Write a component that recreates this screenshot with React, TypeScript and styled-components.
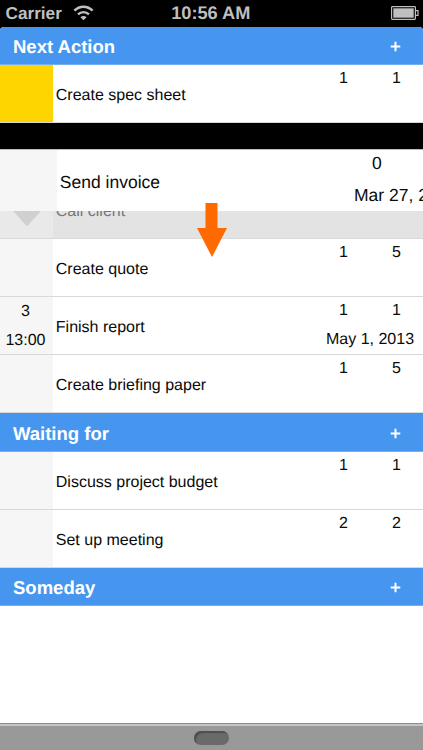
import React from "react";
import styled, { createGlobalStyle } from "styled-components";

const GlobalStyle = createGlobalStyle`
  * { box-sizing: border-box; }
  body { margin: 0; background: #000; }
`;

const Screen = styled.div`
  position: relative;
  width: 423px;
  height: 750px;
  display: flex;
  flex-direction: column;
  overflow: hidden;
  background: #000;
  color: #0a0a0a;
  font-family: "Liberation Sans", Arial, sans-serif;
  font-size: 16px;
  line-height: 20px;
  white-space: nowrap;
  text-rendering: geometricPrecision;
`;

const StatusBar = styled.header`
  flex: none;
  height: 27px;
  display: grid;
  grid-template-columns: 1fr auto 1fr;
  align-items: center;
  padding: 0 4px 1px 5.5px;
  color: #bfbfbf;
  font-size: 17.2px;
  font-weight: bold;
`;

const Carrier = styled.div`
  display: flex;
  align-items: center;
  gap: 11px;
`;

const Clock = styled.div`
  font-size: 18.2px;
  margin-right: 3px;
`;

const BatterySlot = styled.div`
  display: flex;
  justify-content: flex-end;
`;

const List = styled.main`
  flex: 1;
  display: flex;
  flex-direction: column;
  background: #fff;
  border-radius: 4px 4px 0 0;
  overflow: hidden;
`;

const SectionHeader = styled.div`
  flex: none;
  height: 38.4px;
  display: flex;
  align-items: center;
  justify-content: space-between;
  padding: 2px 22px 0 13px;
  background: #4696f0;
  border-bottom: 0.5px solid #74aff3;
  color: #fff;
  font-size: 18.5px;
  font-weight: bold;
`;

const SectionName = styled.span`
  padding-top: 1px;
`;

const Row = styled.div<{ $muted?: boolean }>`
  flex: none;
  height: 58px;
  display: grid;
  grid-template-columns: 53px 1fr 106px;
  border-bottom: 1px solid #d9d9d9;
  background: ${(p) => (p.$muted ? "#e3e3e3" : "#fff")};
  color: ${(p) => (p.$muted ? "#777" : "#0a0a0a")};
`;

const Marker = styled.div<{ $color?: string }>`
  display: flex;
  flex-direction: column;
  align-items: center;
  padding: 5px 2px 0 0;
  gap: 9px;
  background: ${(p) => p.$color ?? "#f6f6f6"};
`;

const Title = styled.div`
  align-self: center;
  padding: 5px 0 0 2.8px;
`;

const Meta = styled.div`
  display: grid;
  grid-template-columns: 1fr 1fr;
  grid-auto-rows: 20px;
  row-gap: 9px;
  padding-top: 4px;
  text-align: center;
`;

const DueDate = styled.div`
  grid-column: 1 / -1;
`;

const DropGap = styled.div`
  flex: none;
  height: 58px;
  background: #000;
`;

const DraggedCard = styled.div`
  position: absolute;
  left: 0;
  top: 149px;
  width: 463px;
  height: 62px;
  display: grid;
  grid-template-columns: 57px 1fr 115px;
  border-top: 1px solid #bdbdbd;
  background: #fff;
  font-size: 17.5px;
`;

const DraggedTitle = styled(Title)`
  padding-top: 3px;
`;

const DraggedMeta = styled(Meta)`
  row-gap: 12px;
  padding-top: 3px;
`;

const DropArrow = styled.svg`
  position: absolute;
  left: 197px;
  top: 203px;
`;

const Dock = styled.footer`
  flex: none;
  height: 27px;
  display: flex;
  align-items: center;
  justify-content: center;
  padding-top: 1px;
  background: #999;
  border-top: 1px solid #8d8d8d;
  box-shadow: inset 0 2px #c4c4c4;
`;

const Grip = styled.div`
  width: 35px;
  height: 14px;
  border-radius: 7px;
  background: #6a6a6a;
  box-shadow: inset 2px 2px 1px #4f4f4f;
`;

type Task = {
  title: string;
  counts?: [string, string];
  due?: string;
  marker?: string[];
  color?: string;
};

const TaskRow = ({ title, counts, due, marker, color }: Task) => (
  <Row>
    <Marker $color={color}>
      {marker?.map((m) => <span key={m}>{m}</span>)}
    </Marker>
    <Title>{title}</Title>
    <Meta>
      {counts?.map((c, i) => <span key={i}>{c}</span>)}
      {due && <DueDate>{due}</DueDate>}
    </Meta>
  </Row>
);

const Section = ({ name }: { name: string }) => (
  <SectionHeader>
    <SectionName>{name}</SectionName>
    <svg width="11" height="11" viewBox="0 0 11 11">
      <path d="M5.5 .7v9.6M.7 5.5h9.6" stroke="#fff" strokeWidth="2" />
    </svg>
  </SectionHeader>
);

const Wifi = () => (
  <svg width="21" height="16" viewBox="0 0 21 16" fill="none" stroke="#bfbfbf">
    <path d="M1.4 5.6C6.5.4 14.5.4 19.6 5.6" strokeWidth="2.6" />
    <path d="M5 9.4c3.2-3.1 7.8-3.1 11 0" strokeWidth="2.4" />
    <path d="M10.5 15.3 7.4 12.2c1.8-1.7 4.4-1.7 6.2 0z" fill="#bfbfbf" stroke="none" />
  </svg>
);

const Battery = () => (
  <svg width="28" height="14" viewBox="0 0 28 14">
    <rect x=".6" y=".6" width="23.8" height="12.8" rx=".8" fill="none" stroke="#bfbfbf" strokeWidth="1.2" />
    <rect x="2.3" y="2.3" width="20.4" height="9.4" fill="#bfbfbf" />
    <path d="M24.5 4.6h2.5v4.8h-2.5" fill="none" stroke="#bfbfbf" strokeWidth="1.2" />
  </svg>
);

export default function App() {
  return (
    <>
      <GlobalStyle />
      <Screen>
        <StatusBar>
          <Carrier>
            <span>Carrier</span>
            <Wifi />
          </Carrier>
          <Clock>10:56 AM</Clock>
          <BatterySlot>
            <Battery />
          </BatterySlot>
        </StatusBar>
        <List>
          <Section name="Next Action" />
          <TaskRow title="Create spec sheet" counts={["1", "1"]} color="#ffd500" />
          <DropGap />
          <Row $muted>
            <Marker $color="#e9e9e9">
              <svg width="30" height="42" viewBox="-2 0 30 42">
                <path d="M0 25h28L14 40.5z" fill="#d0d0d0" />
              </svg>
            </Marker>
            <Title>Call client</Title>
          </Row>
          <TaskRow title="Create quote" counts={["1", "5"]} />
          <TaskRow title="Finish report" counts={["1", "1"]} due="May 1, 2013" marker={["3", "13:00"]} />
          <TaskRow title="Create briefing paper" counts={["1", "5"]} />
          <Section name="Waiting for" />
          <TaskRow title="Discuss project budget" counts={["1", "1"]} />
          <TaskRow title="Set up meeting" counts={["2", "2"]} />
          <Section name="Someday" />
        </List>
        <Dock>
          <Grip />
        </Dock>
        <DraggedCard>
          <Marker />
          <DraggedTitle>Send invoice</DraggedTitle>
          <DraggedMeta>
            <span>0</span>
            <span />
            <DueDate>Mar 27, 2013</DueDate>
          </DraggedMeta>
        </DraggedCard>
        <DropArrow width="30" height="54" viewBox="0 0 30 54">
          <path d="M8.5 0h12v25H30L15 54 0 25h8.5z" fill="#ff6a00" />
        </DropArrow>
      </Screen>
    </>
  );
}
